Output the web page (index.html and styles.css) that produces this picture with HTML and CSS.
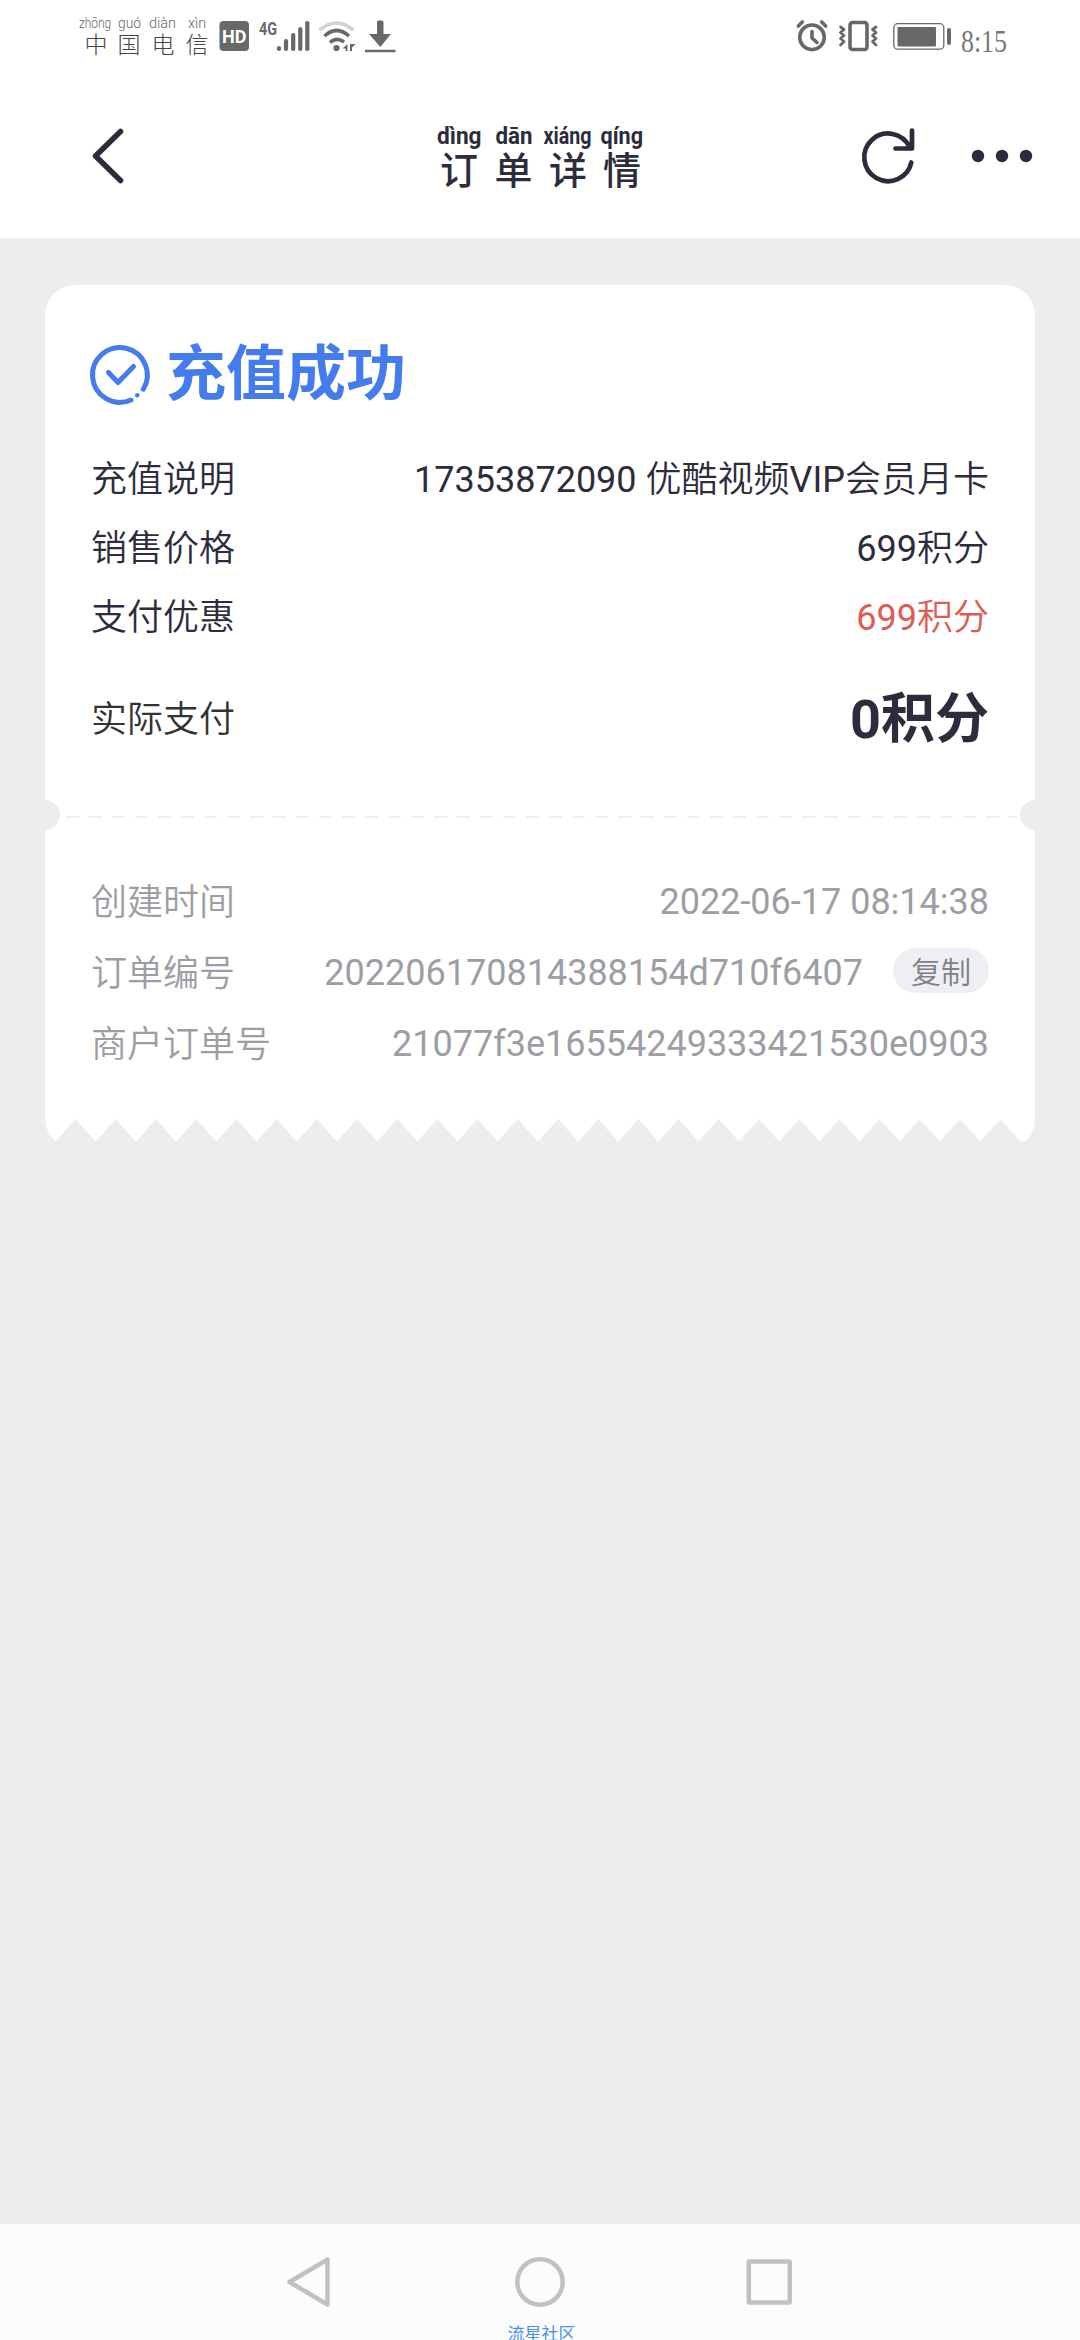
FILE: index.html
```html
<!DOCTYPE html>
<html lang="zh-CN">
<head>
<meta charset="utf-8">
<title>订单详情</title>
<link rel="stylesheet" href="styles.css">
</head>
<body>
<div class="screen">
  <header class="top">
    <div class="status">
      <svg class="carrier" width="140" height="76" viewBox="76 0 140 76">
        <g class="carrier-pinyin">
          <text x="79" y="28" textLength="32" lengthAdjust="spacingAndGlyphs">zhōng</text>
          <text x="118" y="28" textLength="23" lengthAdjust="spacingAndGlyphs">guó</text>
          <text x="149" y="28" textLength="27" lengthAdjust="spacingAndGlyphs">diàn</text>
          <text x="188" y="28" textLength="18" lengthAdjust="spacingAndGlyphs">xìn</text>
        </g>
        <g class="carrier-name">
          <text x="96" y="53">中</text><text x="129" y="53">国</text><text x="163" y="53">电</text><text x="197" y="53">信</text>
        </g>
      </svg>
      <svg class="signals" width="184" height="76" viewBox="216 0 184 76">
        <rect x="219.5" y="21" width="29.5" height="30" rx="4" fill="#686868"/>
        <text class="hd" x="222" y="43" textLength="24.5" lengthAdjust="spacingAndGlyphs">HD</text>
        <text class="net" x="259" y="34.5" textLength="18" lengthAdjust="spacingAndGlyphs">4G</text>
        <path d="M279 48v1M286 41v8M293.200 35v14M300.300 29v20M307.300 23v26" fill="none" stroke="#686868" stroke-width="4.200" stroke-linecap="round"/>
        <g fill="none" stroke="#686868" stroke-width="3.600">
          <path d="M319.500 30Q336.500 16 353.500 30" stroke="#d2d2d2"/>
          <path d="M324.500 36Q336.500 25 349 36M330 42.500Q336.500 36.500 344 42"/>
        </g>
        <circle cx="336.500" cy="48" r="3.100" fill="#686868"/>
        <path d="M347.500 44v7h-1.800v-2.500h-3zM350 44h5.500l-3.500 3.500v3.500h-2z" fill="#686868"/>
        <path d="M377 22q0-1.500 1.500-1.500h3.500q1.500 0 1.500 1.500v12h7.500L380.300 47 369 34h8zM365 49.800h30.500v2.500H365z" fill="#686868"/>
      </svg>
      <svg class="device" width="160" height="76" viewBox="794 0 160 76">
        <g fill="none" stroke="#686868" stroke-width="3.600" stroke-linecap="round" stroke-linejoin="round">
          <circle cx="812" cy="37.300" r="12.300"/>
          <path d="M812 31.500V38l5 4.500M798.300 26l4-4M825.700 26l-4-4"/>
          <rect x="850" y="22.500" width="17" height="27" rx="2.500"/>
          <path d="M840.500 27l3.500 2.500-3.500 3 3.500 3-3.500 3 3.500 3-3.500 3.500M876 27l-3.500 2.500 3.500 3-3.500 3 3.500 3-3.500 3 3.500 3.500" stroke-width="2.800"/>
        </g>
        <rect x="893.800" y="23.700" width="50" height="25.500" rx="4" fill="none" stroke="#686868" stroke-width="1.300"/>
        <rect x="897.500" y="27" width="38.500" height="19.500" rx="1" fill="#686868"/>
        <rect x="947" y="28" width="4" height="17" rx="2" fill="#686868"/>
      </svg>
      <svg class="clock" width="56" height="76" viewBox="954 0 56 76">
        <text x="961" y="52" textLength="46" lengthAdjust="spacingAndGlyphs">8:15</text>
      </svg>
    </div>
    <nav class="bar">
      <svg width="50" height="80" viewBox="84 116 50 80"><path d="M120.500 131.500L95.500 156L120.500 180.500" class="ink-line back"/></svg>
      <svg class="title" width="220" height="100" viewBox="430 106 220 100">
        <g class="title-pinyin">
          <text x="437" y="144" textLength="44.500" lengthAdjust="spacingAndGlyphs">dìng</text>
          <text x="495.500" y="144" textLength="37" lengthAdjust="spacingAndGlyphs">dān</text>
          <text x="543.500" y="144" textLength="48" lengthAdjust="spacingAndGlyphs">xiáng</text>
          <text x="600.500" y="144" textLength="42.500" lengthAdjust="spacingAndGlyphs">qíng</text>
        </g>
        <g class="title-name">
          <text x="459" y="184">订</text><text x="513.500" y="184">单</text><text x="568" y="184">详</text><text x="622" y="184">情</text>
        </g>
      </svg>
      <svg class="actions" width="190" height="80" viewBox="850 116 190 80">
        <path class="ink-line" d="M909.500 147A23.800 23.800 0 1 0 911.300 162.500M912 130.500V148.500H895.500"/>
        <g fill="#2d2c3d"><circle cx="978" cy="156" r="6.200"/><circle cx="1002" cy="156" r="6.200"/><circle cx="1026" cy="156" r="6.200"/></g>
      </svg>
    </nav>
  </header>

  <main class="content">
    <article class="ticket">
      <section class="summary">
        <h1 class="result">
          <svg width="60" height="60" viewBox="90 345 60 60" fill="none" stroke="#447cee" stroke-width="5" stroke-linecap="round" stroke-linejoin="round">
            <path d="M143.300 389.200A27.400 27.400 0 1 0 131 400"/>
            <path d="M108.500 372.500L118 382.500L133.500 366.500"/>
            <circle cx="137.300" cy="395.200" r="2.300" fill="#447cee" stroke="none"/>
          </svg>
          <span>充值成功</span>
        </h1>
        <dl class="rows">
          <div class="row"><dt>充值说明</dt><dd>17353872090&nbsp;<span class="han">优酷视频</span>VIP<span class="han">会员月卡</span></dd></div>
          <div class="row"><dt>销售价格</dt><dd>699<span class="han">积分</span></dd></div>
          <div class="row"><dt>支付优惠</dt><dd class="discount">699<span class="han">积分</span></dd></div>
          <div class="row paid"><dt>实际支付</dt><dd>0积分</dd></div>
        </dl>
      </section>
      <div class="tear"></div>
      <dl class="rows meta">
        <div class="row"><dt>创建时间</dt><dd>2022-06-17 08:14:38</dd></div>
        <div class="row number"><dt>订单编号</dt><dd>202206170814388154d710f6407<button class="copy">复制</button></dd></div>
        <div class="row"><dt>商户订单号</dt><dd>21077f3e16554249333421530e0903</dd></div>
      </dl>
    </article>
    <svg class="edge" width="990" height="23" viewBox="0 0 990 23">
      <defs><pattern id="teeth" x="10.500" y="0" width="40.200" height="23" patternUnits="userSpaceOnUse"><path d="M0 22.500L20.100 0L40.200 22.500V23H0z" fill="#ededed"/></pattern></defs>
      <path d="M0 0H990Q989 15 980 22.500H11Q1 15 0 0z" fill="#fff"/>
      <rect x="10.500" width="965" height="23" fill="url(#teeth)"/>
    </svg>
  </main>

  <footer class="system">
    <svg width="520" height="60" viewBox="280 2252 520 60" fill="none" stroke="#c1c1c1" stroke-width="4.500" stroke-linejoin="round">
      <path d="M289.500 2282L327.500 2259.500V2304.500z"/>
      <circle cx="540" cy="2282" r="22.700"/>
      <rect x="748.800" y="2261.500" width="41" height="41" rx="1"/>
    </svg>
    <div class="community">流星社区</div>
  </footer>
</div>
</body>
</html>
```
FILE: styles.css
```css
* { box-sizing: border-box; }
body { margin: 0; font-family: Roboto, "Noto Sans CJK SC", sans-serif; color: #2d2c3d; }
svg { display: block; flex: none; overflow: visible; }
.screen { width: 1080px; height: 2340px; display: flex; flex-direction: column; background: #ededed; overflow: hidden; }

.top { height: 238px; background: #fff; }
.status { height: 76px; display: flex; padding: 0 70px 0 76px; }
.device { margin-left: auto; }
.carrier-pinyin { font: 300 14px Roboto, sans-serif; fill: #666; }
.carrier-name { font: 300 23px "Noto Sans CJK SC", sans-serif; fill: #444; text-anchor: middle; }
.hd { font: 700 19px Roboto, sans-serif; fill: #fff; }
.net { font: 700 18px Roboto, sans-serif; fill: #686868; }
.clock { font: 31px "Liberation Serif", serif; fill: #777; }

.bar { height: 160px; display: flex; align-items: center; padding: 0 40px 0 84px; }
.title { margin-left: 296px; }
.actions { margin-left: auto; }
.ink-line { fill: none; stroke: #2d2c3d; stroke-width: 4.7; stroke-linecap: round; stroke-linejoin: round; }
.back { stroke-width: 5.5; }
.title-pinyin { font: 700 24px Roboto, sans-serif; fill: #2d2c3d; }
.title-name { font: 500 38px "Noto Sans CJK SC", sans-serif; fill: #2d2c3d; text-anchor: middle; }

.content { flex: 1; padding: 47px 45px 0; }
.ticket { height: 834px; background: #fff; border-radius: 30px 30px 0 0; }
.summary { height: 515px; padding: 54px 46px 0 45px; }
.result { display: flex; align-items: center; gap: 16px; height: 72px; margin: 0; font-size: 60px; line-height: 72px; font-weight: 700; color: #447cee; }
.rows { margin: 30px 0 0; font-size: 36px; }
.row { height: 69px; display: flex; justify-content: space-between; align-items: center; white-space: nowrap; }
dt, .han { font-family: "Noto Sans CJK SC", sans-serif; font-weight: 350; }
dd { margin: 0; display: flex; align-items: baseline; }
.summary dt { padding-left: 1px; }
.discount { color: #e05b53; }
.row.paid { height: 136px; }
.paid dt { color: #333; }
.paid dd { font-size: 54px; font-weight: 700; padding-bottom: 3px; }

.tear { position: relative; height: 30px; background: repeating-linear-gradient(90deg, #f0f0f0 0 13px, #fff 13px 23px) 21px 16px / 951px 2px no-repeat; }
.tear::before, .tear::after { content: ""; position: absolute; top: 0; width: 15px; height: 30px; background: #ededed; }
.tear::before { left: 0; border-radius: 0 15px 15px 0; }
.tear::after { right: 0; border-radius: 15px 0 0 15px; }
.meta { margin: 0; padding: 34px 46px 0; color: #9d9ea4; }
.meta dd { align-items: center; padding-top: 6px; }
.meta .number { height: 73px; }
.copy { width: 96px; height: 45px; margin: -4px 0 0 30px; padding: 0; border: 0; border-radius: 23px; background: #eeeff2; color: #7e8087; font: 350 30px/43px "Noto Sans CJK SC", sans-serif; }

.system { height: 116px; background: #fcfcfc; display: flex; flex-direction: column; align-items: center; padding-top: 28px; overflow: hidden; }
.community { margin-top: 9px; padding-left: 3px; font-size: 17px; line-height: 24px; color: #4590e8; font-family: "Noto Sans CJK SC", sans-serif; }
```
